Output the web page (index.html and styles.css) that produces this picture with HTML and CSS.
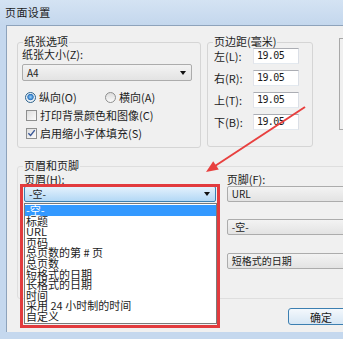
FILE: index.html
```html
<!DOCTYPE html>
<html lang="zh-CN">
<head>
    <meta charset="UTF-8">
    <title>页面设置</title>
    <link rel="stylesheet" href="styles.css">
</head>
<body>
<div class="window">
    <div class="titlebar">页面设置</div>

    <div class="dialog">
        <div class="top">
            <div class="group paper">
                <div class="group-title">纸张选项</div>
                <div class="field-label">纸张大小(Z):</div>
                <div class="combo paper-size"><span>A4</span><i class="caret"></i></div>
                <div class="radio-row">
                    <div class="option"><span class="radio on"></span>纵向(O)</div>
                    <div class="option"><span class="radio"></span>横向(A)</div>
                </div>
                <div class="check-row"><span class="check"></span>打印背景颜色和图像(C)</div>
                <div class="check-row">
                    <span class="check">
                        <svg width="10" height="10" viewBox="0 0 10 10"><path d="M1.5 5.2 L4 7.8 L8.6 1.8" fill="none" stroke="#3b5998" stroke-width="1.6"/></svg>
                    </span>启用缩小字体填充(S)
                </div>
            </div>

            <div class="group margins">
                <div class="group-title">页边距(毫米)</div>
                <div class="margin-row"><span class="margin-label">左(L):</span><span class="num">19.05</span></div>
                <div class="margin-row"><span class="margin-label">右(R):</span><span class="num">19.05</span></div>
                <div class="margin-row"><span class="margin-label">上(T):</span><span class="num">19.05</span></div>
                <div class="margin-row"><span class="margin-label">下(B):</span><span class="num">19.05</span></div>
            </div>

            <div class="group preview"></div>
        </div>

        <div class="group hf">
            <div class="group-title">页眉和页脚</div>
            <div class="hf-cols">
                <div class="hf-col left">
                    <div class="field-label">页眉(H):</div>
                    <div class="combo focused"><span>-空-</span><i class="caret"></i></div>
                    <div class="combo second"><span>-空-</span><i class="caret"></i></div>
                    <div class="combo third"><span>页码</span><i class="caret"></i></div>
                </div>
                <div class="hf-col right">
                    <div class="field-label">页脚(F):</div>
                    <div class="combo"><span>URL</span><i class="caret"></i></div>
                    <div class="combo second"><span>-空-</span><i class="caret"></i></div>
                    <div class="combo third"><span>短格式的日期</span><i class="caret"></i></div>
                </div>
            </div>
        </div>

        <div class="button-row"><button class="btn">确定</button></div>

        <ul class="dropdown">
            <li class="active">-空-</li>
            <li>标题</li>
            <li>URL</li>
            <li>页码</li>
            <li>总页数的第 # 页</li>
            <li>总页数</li>
            <li>短格式的日期</li>
            <li>长格式的日期</li>
            <li>时间</li>
            <li>采用 24 小时制的时间</li>
            <li>自定义</li>
        </ul>
        <div class="mark"></div>
    </div>

    <!-- annotation arrow -->
    <svg class="arrow" width="350" height="339" viewBox="0 0 350 339">
        <line x1="305" y1="107" x2="215" y2="166" stroke="#e8403f" stroke-width="2"/>
        <polygon points="206,172 218.8,169.6 213.2,161.2" fill="#e8403f"/>
    </svg>
</div>
</body>
</html>
```

FILE: styles.css
```css
body {
    margin: 0;
    background: #fff;
    font-family: "Noto Sans CJK SC", "Liberation Sans", sans-serif;
    font-size: 11px;
    color: #1c1c1c;
}
.window {
    position: relative;
    width: 343px;
    height: 339px;
    background: #c5d8ee;
    overflow: hidden;
}
.titlebar {
    height: 25px;
    padding-left: 5px;
    line-height: 24px;
    letter-spacing: 0.4px;
    background: linear-gradient(#d4e3f3, #c4d7ed);
}
.dialog {
    position: relative;
    margin-left: 6px;
    width: 337px;
    height: 307px;
    box-sizing: border-box;
    padding: 16px 0 0 10px;
    border-left: 1px solid #8ea3bb;
    border-top: 1px solid #8ea3bb;
    background: #f0f0f0;
    overflow: hidden;
}
.top {
    display: flex;
    align-items: flex-start;
}
.group {
    box-sizing: border-box;
    border: 1px solid #d5d5d5;
    border-radius: 3px;
    flex-shrink: 0;
}
.group-title {
    width: max-content;
    margin: -8px 0 0 5px;
    padding: 0 1px;
    line-height: 13px;
    background: #f0f0f0;
}
.field-label {
    margin-left: 4px;
    line-height: 13px;
}
.paper {
    width: 184px;
    height: 106px;
}
.combo {
    display: flex;
    align-items: center;
    justify-content: space-between;
    box-sizing: border-box;
    height: 16px;
    padding: 0 5px 0 4px;
    border: 1px solid #acacac;
    border-radius: 2px;
    background: linear-gradient(#f3f3f3, #e3e3e3);
    font-size: 10px;
    line-height: 14px;
    white-space: nowrap;
}
.caret {
    width: 0;
    height: 0;
    border-left: 3.5px solid transparent;
    border-right: 3.5px solid transparent;
    border-top: 4px solid #111;
}
.paper-size {
    margin: 3px 0 0 4px;
    width: 170px;
    height: 17px;
}
.radio-row {
    display: flex;
    height: 14px;
    margin: 9px 0 0 7px;
}
.option {
    display: flex;
    align-items: center;
    width: 80px;
}
.radio {
    width: 11px;
    height: 11px;
    box-sizing: border-box;
    margin-right: 3px;
    border: 1px solid #8e8f8f;
    border-radius: 50%;
    background: linear-gradient(#dcdcdc, #fafafa);
}
.radio.on {
    border-color: #2c628b;
    background: radial-gradient(circle at 50% 45%, #9ad6ff 0, #2a74c0 2.8px, #eef2f6 3.6px);
}
.check-row {
    display: flex;
    align-items: center;
    height: 14px;
    margin: 4px 0 0 8px;
}
.check {
    display: flex;
    align-items: center;
    justify-content: center;
    width: 11px;
    height: 11px;
    box-sizing: border-box;
    margin-right: 3px;
    border: 1px solid #8e8f8f;
    background: linear-gradient(135deg, #dedede, #fbfbfb);
}
.margins {
    margin-left: 6px;
    width: 106px;
    height: 105px;
}
.margin-row {
    display: flex;
    align-items: center;
    height: 16px;
    margin: 6px 0 0 6px;
}
.group-title + .margin-row {
    margin-top: 0;
}
.margin-label {
    width: 39px;
}
.num {
    width: 46px;
    height: 16px;
    box-sizing: border-box;
    padding-left: 3px;
    border: 1px solid;
    border-color: #abadb3 #dbdfe6 #e3e9ef #e2e3ea;
    background: #fff;
    font-family: "DejaVu Sans Mono", monospace;
    font-size: 10px;
    letter-spacing: -0.6px;
    line-height: 14px;
}
.preview {
    margin: -4px 0 0 26px;
    width: 40px;
    height: 92px;
    border-color: #a8a8a8;
    border-radius: 0;
}
.hf {
    margin-top: 18px;
    width: 340px;
    height: 133px;
    border-color: #dedede;
}
.hf-cols {
    display: flex;
    gap: 11px;
    margin: 1px 0 0 6px;
}
.hf-col.left {
    width: 193px;
}
.hf-col.left .field-label,
.hf-col.right .field-label {
    margin-left: 0;
}
.hf-col.right {
    width: 130px;
}
.combo.second {
    margin-top: 17px;
}
.combo.third {
    margin-top: 18px;
}
.combo.focused {
    border-color: #3c7fb1;
    background: linear-gradient(#e4f1fc, #b3d8f5);
}
.button-row {
    padding: 9px 0 0 271px;
}
.btn {
    width: 62px;
    height: 17px;
    padding: 0 0 0 4px;
    border: 1px solid #3c7fb1;
    border-radius: 3px;
    background: linear-gradient(#f4f8fc, #d6e6f4);
    font-family: inherit;
    font-size: 11px;
    line-height: 14px;
    color: #1c1c1c;
    text-align: center;
}
.dropdown {
    position: absolute;
    left: 17px;
    top: 177px;
    width: 193px;
    height: 121px;
    box-sizing: border-box;
    margin: 0;
    padding: 1px 0 0;
    list-style: none;
    border: 1px solid #7a7a7a;
    background: #fff;
}
.dropdown li {
    padding-left: 1px;
    line-height: 10.6px;
    height: 10.6px;
    white-space: nowrap;
}
.dropdown li.active {
    background: #3399ff;
    color: #fff;
}
.mark {
    position: absolute;
    left: 13px;
    top: 158px;
    width: 200px;
    height: 144px;
    box-sizing: border-box;
    border: 3px solid #e23b3e;
}
.arrow {
    position: absolute;
    left: 0;
    top: 0;
    pointer-events: none;
}
```
